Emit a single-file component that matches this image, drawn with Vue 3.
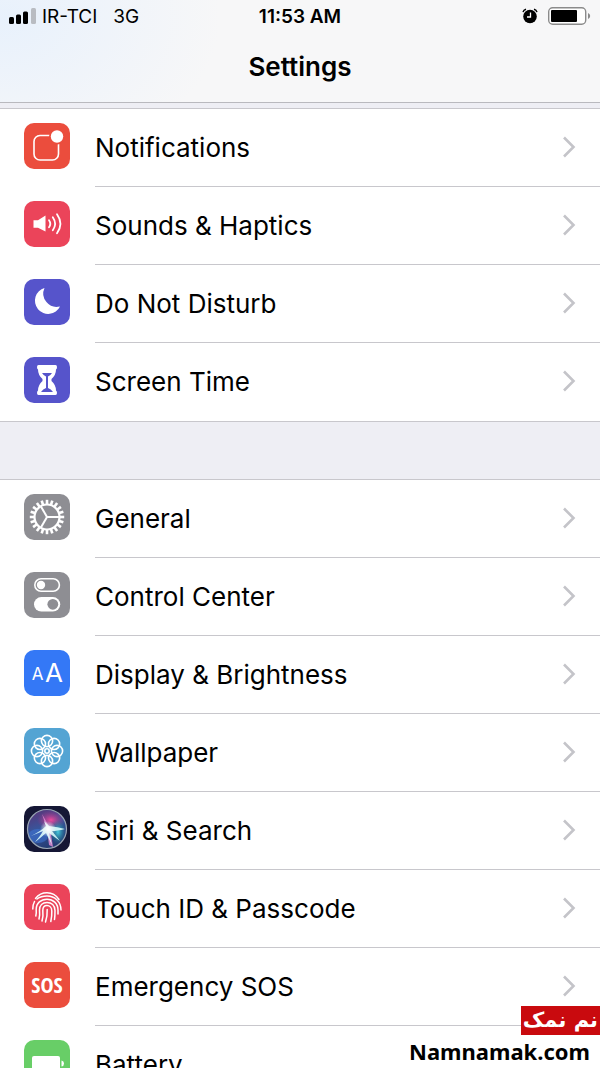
<template>
  <div class="screen">
    <header class="header">
      <div class="status-bar">
        <div class="status-left">
          <svg class="signal" width="27" height="16" viewBox="0 0 27 16" aria-hidden="true">
            <rect x="0" y="9" width="5" height="7" rx="1.5" />
            <rect x="7" y="6.5" width="5" height="9.5" rx="1.5" />
            <rect x="14" y="3.5" width="5" height="12.5" rx="1.5" />
            <rect x="22" y="0" width="5" height="16" rx="1.5" fill="#b9bcc2" />
          </svg>
          <span>IR-TCI</span>
          <span class="network">3G</span>
        </div>
        <span class="clock">11:53 AM</span>
        <div class="status-right">
          <svg width="16" height="16" viewBox="0 0 16 16" aria-hidden="true">
            <circle cx="8" cy="8.5" r="6.8" />
            <path d="M1 4.2Q1.6 1.8 4 1.2M15 4.2Q14.4 1.8 12 1.2" fill="none" stroke="#000" stroke-width="1.4" />
            <path d="M8.5 4.5V9H5" fill="none" stroke="#fff" stroke-width="1.3" />
          </svg>
          <svg width="43" height="18" viewBox="0 0 43 18" aria-hidden="true">
            <rect x="0.7" y="0.7" width="37" height="16.6" rx="4" fill="#fff" stroke="#8b8b8b" stroke-width="1.4" />
            <rect x="3" y="3" width="26" height="12" rx="1" />
            <path d="M40 6Q42.2 7 42.2 9T40 12Z" fill="#8b8b8b" />
          </svg>
        </div>
      </div>
      <h1 class="title">Settings</h1>
    </header>

    <main class="list">
      <ul v-for="(group, g) in groups" :key="g" class="group">
        <li v-for="item in group" :key="item.icon">
          <a class="row" href="#">
            <svg class="icon" viewBox="0 0 46 46" aria-hidden="true">
              <rect width="46" height="46" rx="10" :fill="item.color" />

              <g v-if="item.icon === 'notifications'">
                <rect x="10" y="12.5" width="24.5" height="24.5" rx="6" fill="none" stroke="#fff" stroke-width="1.6" />
                <circle cx="33" cy="13.5" r="8" :fill="item.color" />
                <circle cx="33" cy="13.5" r="6.2" fill="#fff" />
              </g>

              <g v-else-if="item.icon === 'sounds'">
                <path d="M9.5 19.2H14L21.5 14.5V30.5L14 26.8H9.5Z" fill="#fff" />
                <g fill="none" stroke="#fff" stroke-width="1.8" stroke-linecap="round">
                  <path d="M25 19.2Q27.6 22.7 25 26.2" />
                  <path d="M28.8 16.2Q33.4 22.7 28.8 29.2" />
                  <path d="M33 13.2Q39.8 22.7 33 32.2" />
                </g>
              </g>

              <path
                v-else-if="item.icon === 'moon'"
                d="M20.5 9A13.2 13.2 0 1 0 36 27.5A13.4 13.4 0 0 1 20.5 9Z"
                fill="#fff"
              />

              <g v-else-if="item.icon === 'hourglass'">
                <path d="M14.5 8H31.5Q33 8 33 10Q33 12 32 12.5Q32 18 27.5 22V24Q32 28 32 33.5Q33 34 33 36Q33 38 31.5 38H14.5Q13 38 13 36Q13 34 14 33.5Q14 28 18.5 24V22Q14 18 14 12.5Q13 12 13 10Q13 8 14.5 8Z" fill="#fff" />
                <path d="M18 16H28Q26.5 18.5 24 19.5V31Q27 32 29 35H17Q19 32 22 31V19.5Q19.5 18.5 18 16Z" :fill="item.color" />
              </g>

              <g v-else-if="item.icon === 'gear'" fill="none" stroke="#fff">
                <circle cx="23" cy="23" r="12.5" stroke-width="2.2" />
                <path v-for="n in 20" :key="n" d="M23 11V5.8" stroke-width="2.6" :transform="`rotate(${n * 18} 23 23)`" />
                <path v-for="n in 3" :key="'s' + n" d="M23 23H35.5" stroke-width="2" :transform="`rotate(${n * 120} 23 23)`" />
              </g>

              <g v-else-if="item.icon === 'toggles'">
                <rect x="10.8" y="6.8" width="24.6" height="12.4" rx="6.2" fill="none" stroke="#fff" stroke-width="1.6" />
                <circle cx="17" cy="13" r="4.2" fill="#fff" />
                <rect x="10" y="25" width="26.2" height="14.6" rx="7.3" fill="#fff" />
                <circle cx="28.8" cy="32.3" r="5.4" :fill="item.color" />
              </g>

              <g v-else-if="item.icon === 'display'" fill="#fff" class="letters">
                <text x="13.5" y="30" font-size="17" text-anchor="middle">A</text>
                <text x="30" y="32" font-size="26" text-anchor="middle">A</text>
              </g>

              <g v-else-if="item.icon === 'wallpaper'" fill="none" stroke="#fff" stroke-width="1.6">
                <circle cx="23" cy="23" r="2.2" />
                <circle v-for="n in 8" :key="n" cx="23" cy="13" r="5.6" :transform="`rotate(${n * 45} 23 23)`" />
              </g>

              <g v-else-if="item.icon === 'siri'">
                <defs>
                  <linearGradient id="orb" x1="0.2" y1="0" x2="0.6" y2="1">
                    <stop offset="0" stop-color="#593478" />
                    <stop offset="0.45" stop-color="#38559b" />
                    <stop offset="1" stop-color="#233a70" />
                  </linearGradient>
                  <radialGradient id="pink">
                    <stop offset="0" stop-color="#ed4c9d" />
                    <stop offset="1" stop-color="#ae2b81" stop-opacity="0" />
                  </radialGradient>
                  <radialGradient id="cyan">
                    <stop offset="0" stop-color="#46c8dc" />
                    <stop offset="1" stop-color="#188996" stop-opacity="0" />
                  </radialGradient>
                  <radialGradient id="flare">
                    <stop offset="0" stop-color="#fff" />
                    <stop offset="1" stop-color="#fff" stop-opacity="0" />
                  </radialGradient>
                </defs>
                <circle cx="23" cy="23" r="19.5" fill="url(#orb)" />
                <ellipse cx="27" cy="14" rx="14" ry="10" fill="url(#pink)" />
                <ellipse cx="34" cy="26" rx="8" ry="12" fill="url(#cyan)" />
                <ellipse cx="14" cy="30" rx="10" ry="7" fill="#3f7be0" opacity="0.5" />
                <path d="M23 23L18 8L26 22L29 41L25 39Z" fill="#e88fd8" opacity="0.8" />
                <path d="M7 30Q17 25 22 20L20 15L25 20Q34 21 41 23Q33 25 28 25L36 35L25 27L28 39L22 27Q14 34 11 36Q17 29 19 25Q12 28 7 30Z" fill="#d8fbfa" opacity="0.9" />
                <circle cx="24" cy="23" r="8" fill="url(#flare)" />
                <circle cx="23" cy="23" r="19.5" fill="none" stroke="#9aa7b5" stroke-width="1.2" />
              </g>

              <g v-else-if="item.icon === 'touch'" fill="none" stroke="#fff" stroke-width="1.5" stroke-linecap="round">
                <path d="M11.5 14.5Q16 8.8 23 8.8Q30.5 8.8 35 15.5" />
                <path d="M8.8 25Q8.800 20.500 10.5 17.500M13 15Q17 12 23 12C31 12 37 18 37 26" />
                <path d="M11.8 32Q12.500 29 12.200 25.500C12.200 19 17 15.200 23 15.200S34 19.500 34 26V30" />
                <path d="M15 35Q16 31 15.500 26C15.500 21.500 18.500 18.400 23 18.400S31 21.500 31 26.500Q31 32 30.500 35.500" />
                <path d="M18 37Q19.500 32 18.800 26.500C18.800 23.500 20.500 21.600 23 21.600S27.800 23.500 27.800 27Q28 32 26.800 37.500" />
                <path d="M21.500 38Q23.500 32 23.200 25.500" />
              </g>

              <text v-else-if="item.icon === 'sos'" class="sos" x="23" y="31" text-anchor="middle" fill="#fff">SOS</text>

              <g v-else-if="item.icon === 'battery'" fill="#fff">
                <rect x="8" y="16" width="28" height="15" rx="2" />
                <path d="M37.5 20.5Q40 21 40 23.5T37.5 26.5Z" />
              </g>
            </svg>
            <span class="label">{{ item.label }}</span>
            <svg class="chevron" width="14" height="22" viewBox="0 0 14 22" aria-hidden="true">
              <path d="M2 1.5L11.5 11L2 20.5" fill="none" stroke="#c4c4c9" stroke-width="2.6" />
            </svg>
          </a>
        </li>
      </ul>
    </main>

    <div class="watermark">
      <span class="watermark-name" lang="fa" dir="rtl">نم نمک</span>
      <span class="watermark-site">Namnamak.com</span>
    </div>
  </div>
</template>

<script setup>
const groups = [
  [
    { icon: 'notifications', label: 'Notifications', color: '#eb4d3d' },
    { icon: 'sounds', label: 'Sounds & Haptics', color: '#eb445a' },
    { icon: 'moon', label: 'Do Not Disturb', color: '#5654cb' },
    { icon: 'hourglass', label: 'Screen Time', color: '#5654cb' },
  ],
  [
    { icon: 'gear', label: 'General', color: '#8e8e93' },
    { icon: 'toggles', label: 'Control Center', color: '#8e8e93' },
    { icon: 'display', label: 'Display & Brightness', color: '#3478f6' },
    { icon: 'wallpaper', label: 'Wallpaper', color: '#54a4d3' },
    { icon: 'siri', label: 'Siri & Search', color: '#151735' },
    { icon: 'touch', label: 'Touch ID & Passcode', color: '#eb445a' },
    { icon: 'sos', label: 'Emergency SOS', color: '#eb4d3d' },
    { icon: 'battery', label: 'Battery', color: '#68ce67' },
  ],
];
</script>

<style>
body {
  background: #efeff4;
}
</style>

<style scoped>
.screen {
  display: flex;
  flex-direction: column;
  height: 100vh;
  overflow: hidden;
  background: #eeeef4;
  color: #000;
  font-family: Inter, "Liberation Sans", sans-serif;
}

.header {
  flex: none;
  background: radial-gradient(ellipse 220px 150px at 0 20px, #e8f1fc, #f7f7f8);
  border-bottom: 1px solid #b9b9be;
}

.status-bar {
  display: grid;
  grid-template-columns: 1fr auto 1fr;
  align-items: center;
  height: 32px;
  padding: 0 9px;
  font-size: 19px;
}

.status-left,
.status-right {
  display: flex;
  align-items: center;
}

.status-left {
  gap: 6px;
}

.network {
  margin-left: 10px;
}

.clock {
  font-weight: 600;
}

.status-right {
  justify-content: flex-end;
  gap: 10px;
}

.title {
  margin: 0;
  font-size: 26px;
  font-weight: 600;
  line-height: 70px;
  text-align: center;
}

.list {
  flex: 1;
  min-height: 0;
  padding-top: 5px;
  overflow-y: auto;
  scrollbar-width: none;
}

.group {
  margin: 0 0 57px;
  padding: 0;
  list-style: none;
  background: #fff;
  border-top: 1px solid #c8c7cc;
  border-bottom: 1px solid #c8c7cc;
}

.row {
  display: flex;
  align-items: center;
  height: 78px;
  padding-left: 24px;
  color: inherit;
  text-decoration: none;
}

.icon {
  flex: none;
  width: 46px;
  height: 46px;
  margin: 0 25px 4px 0;
}

.label {
  flex: 1;
  font-size: 26px;
  line-height: 77px;
  border-bottom: 1px solid #c8c7cc;
}

.chevron {
  box-sizing: content-box;
  height: 22px;
  padding: 27px 24px 28px 0;
  border-bottom: 1px solid #c8c7cc;
}

li:last-child .label,
li:last-child .chevron {
  border-bottom-color: transparent;
}

.letters {
  font-family: Inter, sans-serif;
}

.sos {
  font-family: "Liberation Sans Narrow", "Open Sans Condensed", "DejaVu Sans Condensed", sans-serif;
  font-size: 22px;
  font-weight: 700;
}

.watermark {
  position: fixed;
  right: 0;
  bottom: 0;
  display: flex;
  flex-direction: column;
  align-items: flex-end;
}

.watermark-name {
  padding: 0 2px;
  background: #c90a0e;
  color: #fff;
  font-family: "DejaVu Sans", sans-serif;
  font-size: 21px;
  font-weight: 700;
  line-height: 29px;
}

.watermark-site {
  padding: 0 10px;
  background: #fff;
  font-family: "Noto Sans", sans-serif;
  font-size: 22px;
  font-weight: 700;
  line-height: 33px;
}
</style>
